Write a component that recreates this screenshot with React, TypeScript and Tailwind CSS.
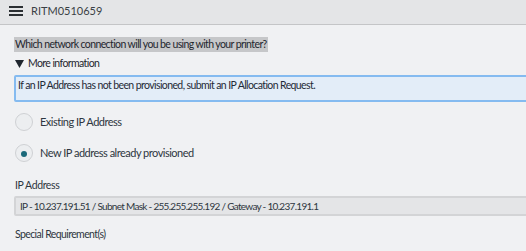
const font = { fontFamily: '"Lato", "Liberation Sans", sans-serif' };

function Radio({ label, checked }: { label: string; checked?: boolean }) {
  return (
    <div className="flex items-center h-[18px] pl-[15px]">
      <span className="w-[18px] h-[18px] rounded-full border border-[#cfd1d4] bg-[#eceef0] flex items-center justify-center shrink-0">
        {checked && <span className="w-[6px] h-[6px] mt-[2px] rounded-full bg-[#1b6a7a]" />}
      </span>
      <span className="ml-[7px] text-[11px] tracking-[-0.5px] text-[#2e3640]">{label}</span>
    </div>
  );
}

export default function App() {
  return (
    <div className="w-[526px] h-[251px] overflow-hidden bg-[#f0f1f3] text-[10.5px] tracking-[-0.6px]" style={font}>
      <div className="h-[25px] bg-[#e4e5e7] border-b border-[#c4c5c7] flex items-center pl-[9px]">
        <svg width="14" height="10" viewBox="0 0 14 10" className="mb-[3px]">
          <rect x="0" y="0" width="14" height="2" fill="#2b2f33" />
          <rect x="0" y="4" width="14" height="2" fill="#2b2f33" />
          <rect x="0" y="8" width="14" height="2" fill="#2b2f33" />
        </svg>
        <span className="ml-[8px] mb-[2px] text-[11px] tracking-normal text-[#3a3f45]">RITM0510659</span>
      </div>

      <div className="flex flex-col">
        <div className="pl-[14px] mt-[12px] flex">
          <span className="bg-[#c6c7c9] h-[15px] leading-[15px] pl-[1px] pr-[1px] text-[#1f262e]">
            Which network connection will you be using with your printer?
          </span>
        </div>

        <div className="pl-[15px] mt-[5px] flex items-center h-[14px] text-[#1f262e]">
          <svg width="9" height="8" viewBox="0 0 9 8" className="mr-[4px]">
            <polygon points="0,0 9,0 4.5,8" fill="#1f262e" />
          </svg>
          More information
        </div>

        <div className="ml-[14px] mt-[4px] w-[520px] h-[27px] bg-[#e3edf8] border-2 border-[#85bbf0] rounded-[2px] flex items-center pl-[2px] pb-[5px] text-[#1f2a36]">
          If an IP Address has not been provisioned, submit an IP Allocation Request.
        </div>

        <div className="mt-[11px]">
          <Radio label="Existing IP Address" />
        </div>
        <div className="mt-[13px]">
          <Radio label="New IP address already provisioned" checked />
        </div>

        <div className="pl-[15px] mt-[16px] text-[#2e3640] h-[14px] leading-[14px] tracking-[-0.4px]">IP Address</div>

        <div className="ml-[14px] mt-[4px] w-[520px] h-[20px] bg-[#e4e5e7] border-2 border-[#d3d4d6] rounded-[2px] flex items-center pl-[4px] text-[10px] tracking-[-0.7px] text-[#2e3640]">
          IP - 10.237.191.51 / Subnet Mask - 255.255.255.192 / Gateway - 10.237.191.1
        </div>

        <div className="pl-[15px] mt-[11px] text-[#2e3640] h-[14px] leading-[14px]">Special Requirement(s)</div>
      </div>
    </div>
  );
}
